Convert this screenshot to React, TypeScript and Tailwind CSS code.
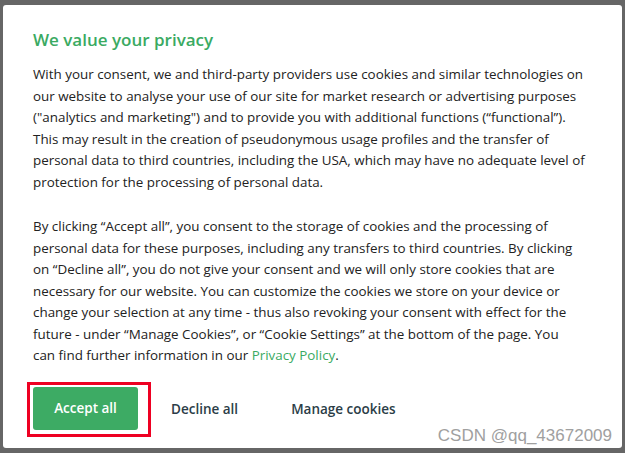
import React from "react";

const font = { fontFamily: '"Open Sans", "Liberation Sans", Arial, sans-serif' };

const para1 = [
  "With your consent, we and third-party providers use cookies and similar technologies on",
  "our website to analyse your use of our site for market research or advertising purposes",
  '("analytics and marketing") and to provide you with additional functions (“functional”).',
  "This may result in the creation of pseudonymous usage profiles and the transfer of",
  "personal data to third countries, including the USA, which may have no adequate level of",
  "protection for the processing of personal data.",
];

const para2 = [
  "By clicking “Accept all”, you consent to the storage of cookies and the processing of",
  "personal data for these purposes, including any transfers to third countries. By clicking",
  "on “Decline all”, you do not give your consent and we will only store cookies that are",
  "necessary for our website. You can customize the cookies we store on your device or",
  "change your selection at any time - thus also revoking your consent with effect for the",
  "future - under “Manage Cookies”, or “Cookie Settings” at the bottom of the page. You",
];

export default function App() {
  return (
    <div className="w-[625px] h-[453px] bg-[#666666] pt-[5px] pl-[3px] overflow-hidden">
      <div
        className="relative w-[619px] h-[443px] bg-white rounded-[3px] px-[30px] pt-[23px]"
        style={font}
      >
        <h2 className="text-[17px] leading-[24px] font-semibold text-[#3aaa62]">
          We value your privacy
        </h2>
        <div className="mt-[12px] text-[13.4px] leading-[21.5px] text-[#222222] whitespace-nowrap">
          <p>
            {para1.map((l) => (
              <span key={l} className="block">{l}</span>
            ))}
          </p>
          <p className="mt-[23px]">
            {para2.map((l) => (
              <span key={l} className="block">{l}</span>
            ))}
            <span className="block">
              can find further information in our{" "}
              <span className="text-[#3aaa62]">Privacy Policy</span>.
            </span>
          </p>
        </div>
        <div className="mt-[15px] flex items-center">
          <div className="-ml-[6px] border-[3px] border-[#ee0022] pl-[3px] pr-[10px] pt-[2px] pb-[4px]">
            <button className="w-[105px] h-[43px] rounded-[3px] bg-[#3dab64] text-white text-[13.5px] font-semibold">
              Accept all
            </button>
          </div>
          <button className="ml-[20px] text-[13.5px] font-semibold text-[#2b3d47]">Decline all</button>
          <button className="ml-[53px] text-[13.5px] font-semibold text-[#2b3d47]">Manage cookies</button>
        </div>
        <div
          className="absolute right-[10px] bottom-0 text-[17px] text-[#a0a0a0]"
          style={{ fontFamily: '"Liberation Sans", Arial, sans-serif' }}
        >
          CSDN @qq_43672009
        </div>
      </div>
    </div>
  );
}
